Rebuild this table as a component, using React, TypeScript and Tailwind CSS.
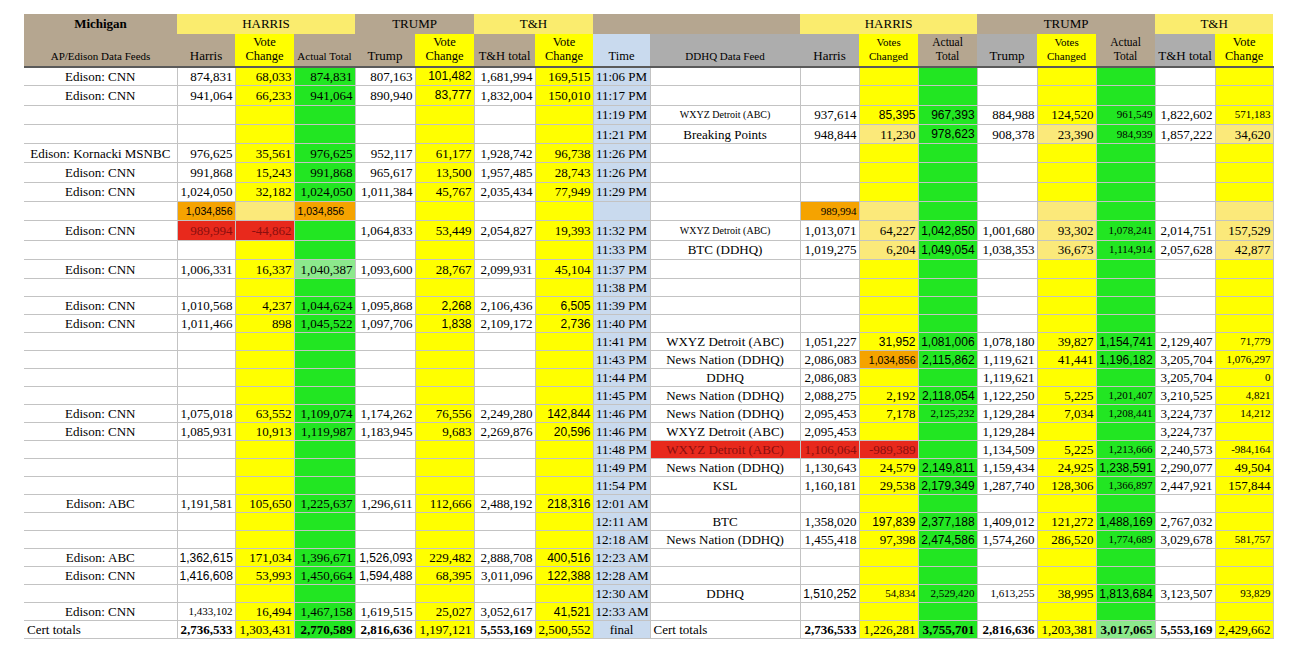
import React from "react";

// column defaults, left block (feed + time) then right block (DDHQ)
const LBG = [
  "bg-white",
  "bg-white",
  "bg-[#ffff00]",
  "bg-[#22e622]",
  "bg-white",
  "bg-[#ffff00]",
  "bg-white",
  "bg-[#ffff00]",
  "bg-[#c9daee]",
];
const RBG = [
  "bg-white",
  "bg-white",
  "bg-[#ffff00]",
  "bg-[#22e622]",
  "bg-white",
  "bg-[#ffff00]",
  "bg-[#22e622]",
  "bg-white",
  "bg-[#ffff00]",
];

const WIDTHS = [
  "w-[153px]", "w-[58px]", "w-[59px]", "w-[61px]", "w-[60px]", "w-[59px]", "w-[61px]", "w-[58px]", "w-[57px]",
  "w-[150px]", "w-[59px]", "w-[59px]", "w-[59px]", "w-[60px]", "w-[59px]", "w-[59px]", "w-[60px]", "w-[58px]",
];

const E9 = ["", "", "", "", "", "", "", "", ""];
const blankL = (t: string) => ["", "", "", "", "", "", "", "", t];

// flags after "|": s sans, t small sans, m small serif, x tiny, b bold,
// o orange, p pale yellow, r red, l light green, R dark red text, L left
const rows: string[][] = [
  ["Edison: CNN", "874,831", "68,033", "874,831", "807,163", "101,482|s", "1,681,994", "169,515", "11:06 PM", ...E9],
  ["Edison: CNN", "941,064", "66,233", "941,064", "890,940", "83,777|s", "1,832,004", "150,010", "11:17 PM", ...E9],
  [...blankL("11:19 PM"), "WXYZ Detroit (ABC)|x", "937,614", "85,395|s", "967,393|s", "884,988", "124,520", "961,549|m", "1,822,602", "571,183|m"],
  [...blankL("11:21 PM"), "Breaking Points", "948,844", "11,230|p", "978,623|s", "908,378", "23,390|p", "984,939|m", "1,857,222", "34,620|p"],
  ["Edison: Kornacki MSNBC", "976,625", "35,561", "976,625", "952,117", "61,177", "1,928,742", "96,738", "11:26 PM", ...E9],
  ["Edison: CNN", "991,868", "15,243", "991,868", "965,617", "13,500", "1,957,485", "28,743", "11:26 PM", ...E9],
  ["Edison: CNN", "1,024,050", "32,182", "1,024,050", "1,011,384", "45,767", "2,035,434", "77,949", "11:29 PM", ...E9],
  ["", "1,034,856|to", "|p", "1,034,856|toL", "", "", "", "", "", "", "989,994|mo", "|p", "", "", "|p", "", "", "|p"],
  ["Edison: CNN", "989,994|rR", "-44,862|rR", "", "1,064,833", "53,449", "2,054,827", "19,393", "11:32 PM", "WXYZ Detroit (ABC)|x", "1,013,071", "64,227|p", "1,042,850|s", "1,001,680", "93,302|p", "1,078,241|m", "2,014,751", "157,529|p"],
  [...blankL("11:33 PM"), "BTC (DDHQ)", "1,019,275", "6,204|p", "1,049,054|s", "1,038,353", "36,673|p", "1,114,914|m", "2,057,628", "42,877|p"],
  ["Edison: CNN", "1,006,331", "16,337", "1,040,387|l", "1,093,600", "28,767", "2,099,931", "45,104", "11:37 PM", ...E9],
  [...blankL("11:38 PM"), ...E9],
  ["Edison: CNN", "1,010,568", "4,237", "1,044,624", "1,095,868", "2,268|s", "2,106,436", "6,505|s", "11:39 PM", ...E9],
  ["Edison: CNN", "1,011,466", "898", "1,045,522", "1,097,706", "1,838|s", "2,109,172", "2,736|s", "11:40 PM", ...E9],
  [...blankL("11:41 PM"), "WXYZ Detroit (ABC)", "1,051,227", "31,952|s", "1,081,006|s", "1,078,180", "39,827", "1,154,741|s", "2,129,407", "71,779|m"],
  [...blankL("11:43 PM"), "News Nation (DDHQ)", "2,086,083", "1,034,856|to", "2,115,862|s", "1,119,621", "41,441", "1,196,182|s", "3,205,704", "1,076,297|m"],
  [...blankL("11:44 PM"), "DDHQ", "2,086,083", "", "", "1,119,621", "", "", "3,205,704", "0|m"],
  [...blankL("11:45 PM"), "News Nation (DDHQ)", "2,088,275", "2,192", "2,118,054|s", "1,122,250", "5,225", "1,201,407|m", "3,210,525", "4,821|m"],
  ["Edison: CNN", "1,075,018", "63,552", "1,109,074", "1,174,262", "76,556", "2,249,280", "142,844|s", "11:46 PM", "News Nation (DDHQ)", "2,095,453", "7,178", "2,125,232|m", "1,129,284", "7,034", "1,208,441|m", "3,224,737", "14,212|m"],
  ["Edison: CNN", "1,085,931", "10,913", "1,119,987", "1,183,945", "9,683", "2,269,876", "20,596|s", "11:46 PM", "WXYZ Detroit (ABC)", "2,095,453", "", "", "1,129,284", "", "", "3,224,737", ""],
  [...blankL("11:48 PM"), "WXYZ Detroit (ABC)|rR", "1,106,064|rR", "-989,389|rR", "", "1,134,509", "5,225", "1,213,666|m", "2,240,573", "-984,164|m"],
  [...blankL("11:49 PM"), "News Nation (DDHQ)", "1,130,643", "24,579", "2,149,811|s", "1,159,434", "24,925", "1,238,591|s", "2,290,077", "49,504"],
  [...blankL("11:54 PM"), "KSL", "1,160,181", "29,538", "2,179,349|s", "1,287,740", "128,306", "1,366,897|m", "2,447,921", "157,844"],
  ["Edison: ABC", "1,191,581", "105,650", "1,225,637", "1,296,611", "112,666", "2,488,192", "218,316|s", "12:01 AM", ...E9],
  [...blankL("12:11 AM"), "BTC", "1,358,020", "197,839|s", "2,377,188|s", "1,409,012", "121,272", "1,488,169|s", "2,767,032", ""],
  [...blankL("12:18 AM"), "News Nation (DDHQ)", "1,455,418", "97,398", "2,474,586|s", "1,574,260", "286,520", "1,774,689|m", "3,029,678", "581,757|m"],
  ["Edison: ABC", "1,362,615|s", "171,034", "1,396,671", "1,526,093|s", "229,482", "2,888,708", "400,516|s", "12:23 AM", ...E9],
  ["Edison: CNN", "1,416,608|s", "53,993", "1,450,664", "1,594,488|s", "68,395", "3,011,096", "122,388|s", "12:28 AM", ...E9],
  [...blankL("12:30 AM"), "DDHQ", "1,510,252|s", "54,834|m", "2,529,420|m", "1,613,255|m", "38,995", "1,813,684|s", "3,123,507", "93,829|m"],
  ["Edison: CNN", "1,433,102|m", "16,494", "1,467,158", "1,619,515", "25,027", "3,052,617", "41,521|s", "12:33 AM", ...E9],
  ["Cert totals|L", "2,736,533|b", "1,303,431", "2,770,589|b", "2,816,636|b", "1,197,121", "5,553,169|b", "2,500,552", "final", "Cert totals|L", "2,736,533|b", "1,226,281", "3,755,701|b", "2,816,636|b", "1,203,381", "3,017,065|bl", "5,553,169|b", "2,429,662"],
];

function cellClass(i: number, f: string) {
  let bg = i < 9 ? LBG[i] : RBG[i - 9];
  if (f.includes("o")) bg = "bg-[#f5a300]";
  if (f.includes("p")) bg = "bg-[#fbe97a]";
  if (f.includes("r")) bg = "bg-[#e8291c]";
  if (f.includes("l")) bg = "bg-[#8ce98c]";

  let font = "text-[13px]";
  if (f.includes("s")) font = "font-['Liberation_Sans',Arial,sans-serif] text-[12px]";
  if (f.includes("t")) font = "font-['Liberation_Sans',Arial,sans-serif] text-[10.5px]";
  if (f.includes("m")) font = "text-[11px]";
  if (f.includes("x")) font = "text-[10px]";

  const centered = i === 0 || i === 8 || i === 9;
  let align = centered ? "text-center" : "text-right";
  if (f.includes("L")) align = "text-left pl-[3px]";

  return [
    "border border-[#c3c3c3] px-[2px] leading-none whitespace-nowrap overflow-hidden",
    i === 0 ? "border-l-0" : "",
    bg,
    font,
    align,
    f.includes("b") ? "font-bold" : "",
    f.includes("R") ? "text-[#8b0f0f]" : "text-black",
  ].join(" ");
}

const tan = "bg-[#b5a690]";
const hy = "bg-[#faec6e]";
const yl = "bg-[#ffff00]";
const gr = "bg-[#adadad]";
const sub = "align-bottom pb-[3px] font-normal leading-[14px] border-b-2 border-[#5a5a5a]";

export default function App() {
  return (
    <div className="min-h-screen bg-white pt-[14px] pl-[24px] font-['Liberation_Serif','Times_New_Roman',serif] text-black">
      <table className="table-fixed border-collapse w-[1249px]">
        <colgroup>
          {WIDTHS.map((w, i) => (
            <col key={i} className={w} />
          ))}
        </colgroup>
        <thead>
          <tr className="h-[18px] text-[13px]">
            <th className={`${tan} font-bold`}>Michigan</th>
            <th colSpan={3} className={`${hy} font-normal`}>HARRIS</th>
            <th colSpan={2} className={`${tan} font-normal`}>TRUMP</th>
            <th colSpan={2} className={`${hy} font-normal`}>T&amp;H</th>
            <th colSpan={2} className={tan}></th>
            <th colSpan={3} className={`${hy} font-normal`}>HARRIS</th>
            <th colSpan={3} className={`${tan} font-normal`}>TRUMP</th>
            <th colSpan={2} className={`${hy} font-normal`}>T&amp;H</th>
          </tr>
          <tr className="h-[33px]">
            <th className={`${tan} ${sub} text-[11px]`}>AP/Edison Data Feeds</th>
            <th className={`${tan} ${sub} text-[13px]`}>Harris</th>
            <th className={`${yl} ${sub} text-[12.5px]`}>Vote<br />Change</th>
            <th className={`${tan} ${sub} text-[11px]`}>Actual Total</th>
            <th className={`${tan} ${sub} text-[13px]`}>Trump</th>
            <th className={`${yl} ${sub} text-[12.5px]`}>Vote<br />Change</th>
            <th className={`${tan} ${sub} text-[12.5px]`}>T&amp;H total</th>
            <th className={`${yl} ${sub} text-[12.5px]`}>Vote<br />Change</th>
            <th className={`bg-[#c9daee] ${sub} text-[12.5px]`}>Time</th>
            <th className={`${gr} ${sub} text-[11px]`}>DDHQ Data Feed</th>
            <th className={`${gr} ${sub} text-[13px]`}>Harris</th>
            <th className={`${yl} ${sub} text-[11px]`}>Votes<br />Changed</th>
            <th className={`${tan} ${sub} text-[11.5px]`}>Actual<br />Total</th>
            <th className={`${gr} ${sub} text-[13px]`}>Trump</th>
            <th className={`${yl} ${sub} text-[11px]`}>Votes<br />Changed</th>
            <th className={`${tan} ${sub} text-[11.5px]`}>Actual<br />Total</th>
            <th className={`${gr} ${sub} text-[13px]`}>T&amp;H total</th>
            <th className={`${yl} ${sub} text-[12.5px]`}>Vote<br />Change</th>
          </tr>
        </thead>
        <tbody>
          {rows.map((r, ri) => (
            <tr key={ri} className={ri < 11 ? "h-[19.3px]" : "h-[18px]"}>
              {r.map((c, ci) => {
                const [v, f = ""] = c.split("|");
                return (
                  <td key={ci} className={cellClass(ci, f)}>
                    {v}
                  </td>
                );
              })}
            </tr>
          ))}
        </tbody>
      </table>
    </div>
  );
}
